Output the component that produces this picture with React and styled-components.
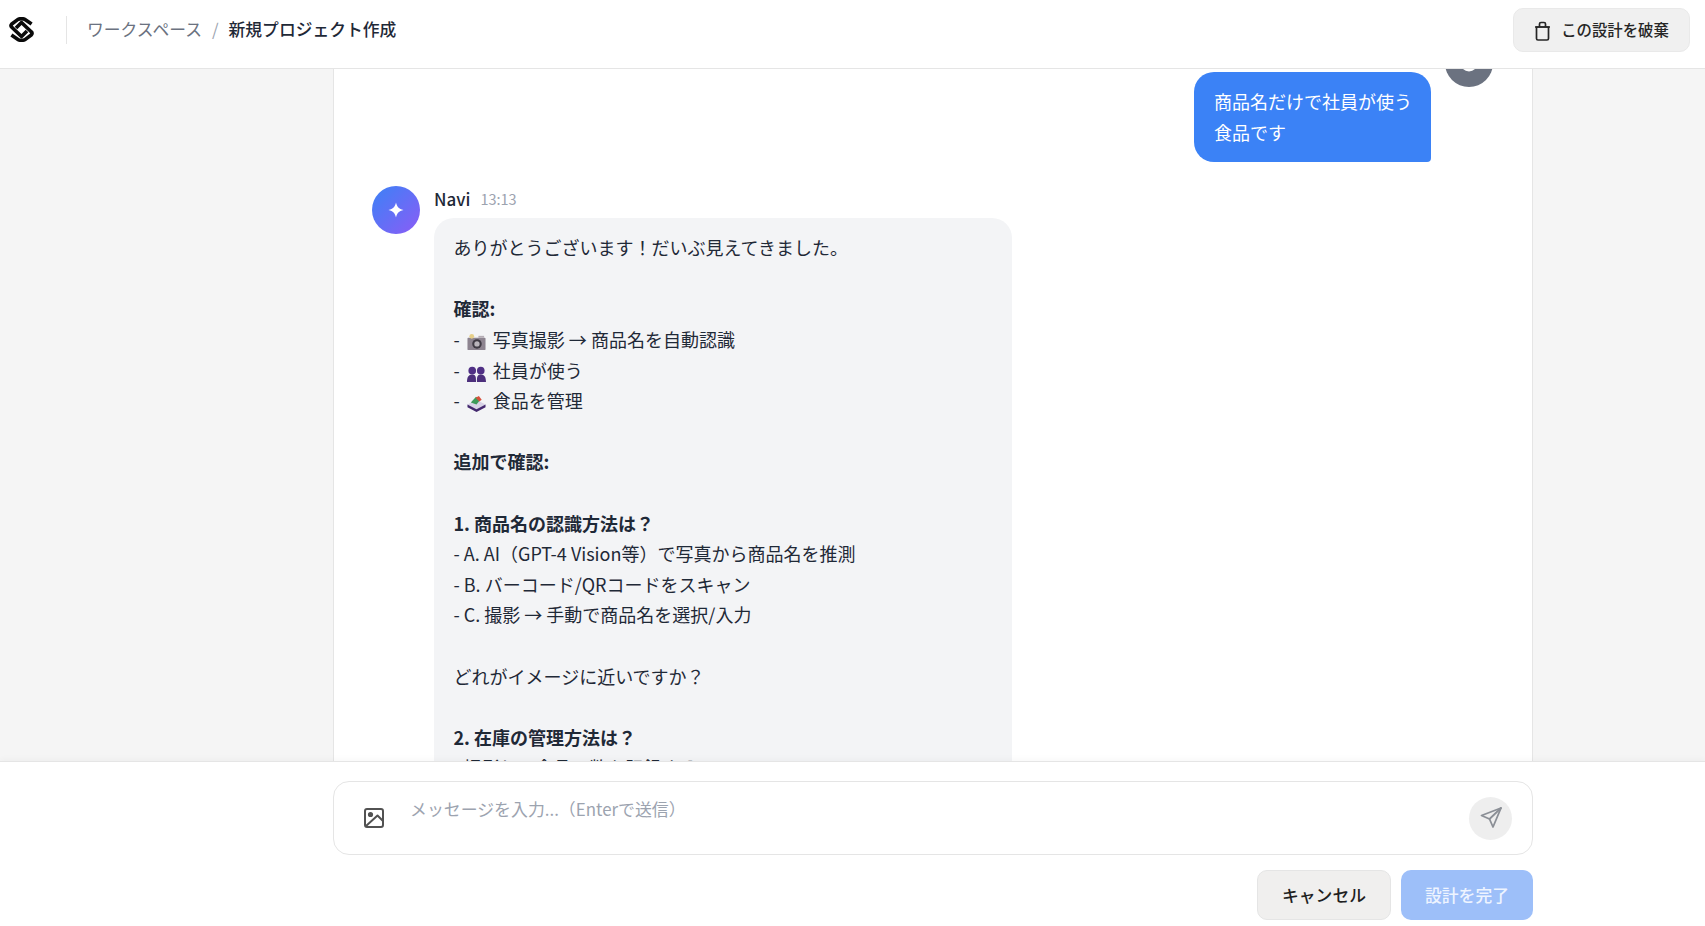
import React from "react";
import styled, { createGlobalStyle } from "styled-components";

const Global = createGlobalStyle`
  html, body { margin: 0; padding: 0; height: 100%; }
  body { font-family: "Noto Sans CJK JP", "Noto Sans", sans-serif; background: #f5f5f5; color: #1f2937; }
  #root { height: 100%; }
  * { box-sizing: border-box; }
`;

const Page = styled.div`
  height: 926px;
  display: flex;
  flex-direction: column;
  overflow: hidden;
`;

const Header = styled.header`
  height: 69px;
  flex: none;
  display: flex;
  align-items: center;
  justify-content: space-between;
  padding: 0 15px 9px 9px;
  background: #fff;
  border-bottom: 1px solid #e5e5e5;
`;

const HeaderLeft = styled.div`
  display: flex;
  align-items: center;
`;

const LogoWrap = styled.div`
  width: 25px;
  height: 25px;
  display: flex;
  margin-right: 32px;
`;

const Divider = styled.div`
  width: 1px;
  height: 28px;
  background: #e5e5e5;
  margin-right: 20px;
`;

const Crumbs = styled.nav`
  display: flex;
  align-items: center;
  gap: 10px;
  padding-bottom: 2px;
  font-size: 16.8px;
  color: #6b7280;
`;

const CrumbCurrent = styled.span`
  color: #1f2937;
  font-weight: 500;
`;

const Sep = styled.span`
  color: #9ca3af;
`;

const DiscardButton = styled.button`
  height: 44px;
  width: 177px;
  border: 1px solid #e9e9e9;
  border-radius: 10px;
  background: #f0f0f0;
  padding: 0 0 2px;
  font: 500 15.4px "Noto Sans CJK JP", sans-serif;
  color: #262626;
  display: flex;
  align-items: center;
  justify-content: center;
  gap: 10px;
`;

const TrashIcon = styled.svg`
  width: 17px;
  height: 20px;
  margin-top: 4px;
  fill: none;
  stroke: #262626;
  stroke-width: 1.7;
  stroke-linejoin: round;
`;

const Main = styled.main`
  flex: 1;
  min-height: 0;
  width: 1200px;
  margin-left: 333px;
  background: #fff;
  border-left: 1px solid #e5e5e5;
  border-right: 1px solid #e5e5e5;
  overflow: hidden;
  padding: 0 39px 0 38px;
`;

const MessageList = styled.div`
  margin-top: -30px;
  display: flex;
  flex-direction: column;
  gap: 24px;
`;

const Row = styled.div`
  display: flex;
  gap: 14px;
  flex-direction: ${(p) => (p.$mine ? "row-reverse" : "row")};
`;

const Avatar = styled.div`
  width: 48px;
  height: 48px;
  flex: none;
  border-radius: 50%;
  display: flex;
  align-items: center;
  justify-content: center;
  background: ${(p) => (p.$bot ? "linear-gradient(135deg, #3b82f6, #8b5cf6)" : "#6b7280")};
`;

const MessageBody = styled.div`
  display: flex;
  flex-direction: column;
  align-items: ${(p) => (p.$mine ? "flex-end" : "flex-start")};
`;

const Meta = styled.div`
  height: ${(p) => (p.$mine ? "33px" : "32px")};
  padding-bottom: 7px;
  display: flex;
  align-items: center;
  gap: 10px;
`;

const Name = styled.span`
  font-size: 17px;
  font-weight: 500;
  color: #1f2937;
`;

const Time = styled.span`
  font-size: 14.5px;
  color: #9ca3af;
`;

const UserBubble = styled.div`
  width: 237px;
  padding: 14px 20px;
  background: #3b82f6;
  color: #fff;
  font-size: 18px;
  line-height: 31px;
  white-space: nowrap;
  border-radius: 20px 20px 4px 20px;
`;

const BotBubble = styled.div`
  width: 578px;
  padding: 14.3px 20px 14px 19.5px;
  background: #f3f4f6;
  color: #1f2937;
  font-size: 18px;
  line-height: 30.6px;
  border-radius: 20px 20px 20px 4px;
  white-space: pre-wrap;
`;

const Strong = styled.strong`
  font-weight: 700;
`;

const EmojiIcon = styled.svg`
  width: 19px;
  height: 19px;
  vertical-align: -5px;
  margin: 0 3px 0 3px;
`;

const Footer = styled.footer`
  flex: none;
  position: relative;
  height: 165px;
  background: #fff;
  border-top: 1px solid #e5e5e5;
  box-shadow: 0 -2px 6px rgba(0, 0, 0, 0.03);
  padding: 19px 0 0 333px;
  display: flex;
  flex-direction: column;
  align-items: flex-start;
`;

const Composer = styled.div`
  width: 1200px;
  height: 74px;
  border: 1px solid #e5e5e5;
  border-radius: 16px;
  background: #fff;
  display: flex;
  align-items: center;
  padding: 0 20px 0 28px;
`;

const AttachIcon = styled.div`
  width: 24px;
  height: 24px;
  display: flex;
  margin-right: 24px;
  color: #525252;
`;

const Placeholder = styled.div`
  flex: 1;
  align-self: flex-start;
  padding-top: 13px;
  font-size: 16.9px;
  line-height: 28px;
  color: #9ca3af;
`;

const SendButton = styled.div`
  width: 43px;
  height: 43px;
  border-radius: 50%;
  background: #eeeeee;
  display: flex;
  align-items: center;
  justify-content: center;
  color: #8b8f96;
`;

const Actions = styled.div`
  width: 1200px;
  display: flex;
  justify-content: flex-end;
  gap: 10px;
  margin-top: 15px;
`;

const CancelButton = styled.button`
  width: 134px;
  height: 50px;
  border: 1px solid #e5e5e5;
  border-radius: 10px;
  background: #f0efee;
  color: #1f1f1f;
  font: 500 16.8px "Noto Sans CJK JP", sans-serif;
`;

const FinishButton = styled.button`
  width: 132px;
  height: 50px;
  border: none;
  border-radius: 10px;
  background: #9dbff9;
  color: #eef4ff;
  font: 500 16.8px "Noto Sans CJK JP", sans-serif;
`;

const Camera = () => (
  <EmojiIcon viewBox="0 0 20 20">
    <rect x="0.500" y="5" width="19" height="13" rx="1" fill="#8d8490" />
    <circle cx="5" cy="3.500" r="2.500" fill="#e6cf8a" />
    <rect x="12" y="3" width="6" height="2" fill="#b5adb5" />
    <circle cx="10.500" cy="11.500" r="5" fill="#3f3a44" />
    <circle cx="10.500" cy="11.500" r="2.800" fill="#b9b4bb" />
  </EmojiIcon>
);

const People = () => (
  <EmojiIcon viewBox="0 0 20 20">
    <circle cx="5.500" cy="7" r="4" fill="#4f2f85" />
    <circle cx="14.500" cy="7" r="4" fill="#4f2f85" />
    <path d="M0 19c0-5 1.500-8 5.500-8s4 3 4 8zM10.500 19c0-5 0-8 4-8s5.500 3 5.500 8z" fill="#4c2f7c" />
  </EmojiIcon>
);

const Food = () => (
  <EmojiIcon viewBox="0 0 20 20">
    <path d="M0.500 11l9.500-5 9.500 5-9.500 5z" fill="#d7d2e6" />
    <path d="M0.500 11v3l9.500 5 9.500-5v-3l-9.500 5z" fill="#43286e" />
    <path d="M4 9L9.500 3l4.500 3-4 5z" fill="#3e9a5a" />
    <path d="M9 4l3.500-2 3 4-2.500 2z" fill="#d8503c" />
  </EmojiIcon>
);

const Logo = () => (
  <svg width="25" height="25" viewBox="0 0 25 25" fill="none" stroke="#0a0a0a" strokeWidth="3.600" strokeLinejoin="round">
    <path d="M22.600 7L16 2.400Q12.500 .9 9 2.400L2.800 7Q1 9 2.800 10.300L12.500 19.500L18 14" />
    <path d="M2.400 18L9 22.600Q12.500 24.100 16 22.600L22.200 18Q24 16 22.200 14.700L12.500 5.500L7 11" />
  </svg>
);

const Trash = () => (
  <TrashIcon viewBox="0 0 17 20">
    <path d="M2.500 6h12v11.500a1.500 1.500 0 0 1-1.500 1.500H4a1.500 1.500 0 0 1-1.500-1.500z" />
    <path d="M1 6h15M5.500 6V3a1.500 1.500 0 0 1 1.500-1.500h3A1.500 1.500 0 0 1 11.500 3v3" />
  </TrashIcon>
);

const Sparkle = () => (
  <svg width="20" height="20" viewBox="0 0 20 20" fill="#fff">
    <path d="M10 2.500c1 4.300 2.800 6.500 7.500 7.500-4.700 1-6.500 3.200-7.500 7.500C9 13.200 7.200 11 2.500 10 7.200 9 9 6.800 10 2.500z" />
  </svg>
);

const UserGlyph = () => (
  <svg width="18" height="18" viewBox="0 0 18 18" fill="#fff">
    <circle cx="9" cy="9" r="8.500" />
  </svg>
);

const ImageIcon = () => (
  <svg width="24" height="24" viewBox="0 0 24 24" fill="none" stroke="currentColor" strokeWidth="2" strokeLinejoin="round">
    <rect x="3" y="3" width="18" height="18" rx="2" />
    <circle cx="8.500" cy="8.500" r="1.600" fill="currentColor" />
    <path d="M4 20L15.500 9.500l5.500 5.500" />
  </svg>
);

const SendIcon = () => (
  <svg width="24" height="24" viewBox="0 0 24 24" fill="none" stroke="currentColor" strokeWidth="1.800" strokeLinejoin="round" strokeLinecap="round">
    <path d="M22 2L2.500 9.500l8 3.500 3.500 8z" />
    <path d="M22 2L10.500 13" />
  </svg>
);

export default function App() {
  return (
    <Page>
      <Global />
      <Header>
        <HeaderLeft>
          <LogoWrap><Logo /></LogoWrap>
          <Divider />
          <Crumbs>
            <span>ワークスペース</span>
            <Sep>/</Sep>
            <CrumbCurrent>新規プロジェクト作成</CrumbCurrent>
          </Crumbs>
        </HeaderLeft>
        <DiscardButton><Trash />この設計を破棄</DiscardButton>
      </Header>
      <Main>
        <MessageList>
          <Row $mine>
            <Avatar><UserGlyph /></Avatar>
            <MessageBody $mine>
              <Meta $mine />
              <UserBubble>商品名だけで社員が使う<br />食品です</UserBubble>
            </MessageBody>
          </Row>
          <Row>
            <Avatar $bot><Sparkle /></Avatar>
            <MessageBody>
              <Meta>
                <Name>Navi</Name>
                <Time>13:13</Time>
              </Meta>
              <BotBubble>
                {"ありがとうございます！だいぶ見えてきました。\n\n"}
                <Strong>確認:</Strong>
                {"\n- "}<Camera />{" 写真撮影 → 商品名を自動認識\n- "}
                <People />{" 社員が使う\n- "}
                <Food />{" 食品を管理\n\n"}
                <Strong>追加で確認:</Strong>
                {"\n\n"}
                <Strong>1. 商品名の認識方法は？</Strong>
                {"\n- A. AI（GPT-4 Vision等）で写真から商品名を推測\n- B. バーコード/QRコードをスキャン\n- C. 撮影 → 手動で商品名を選択/入力\n\nどれがイメージに近いですか？\n\n"}
                <Strong>2. 在庫の管理方法は？</Strong>
                {"\n- 撮影して食品の数を記録する\n"}
              </BotBubble>
            </MessageBody>
          </Row>
        </MessageList>
      </Main>
      <Footer>
        <Composer>
          <AttachIcon><ImageIcon /></AttachIcon>
          <Placeholder>メッセージを入力...（Enterで送信）</Placeholder>
          <SendButton><SendIcon /></SendButton>
        </Composer>
        <Actions>
          <CancelButton>キャンセル</CancelButton>
          <FinishButton>設計を完了</FinishButton>
        </Actions>
      </Footer>
    </Page>
  );
}
